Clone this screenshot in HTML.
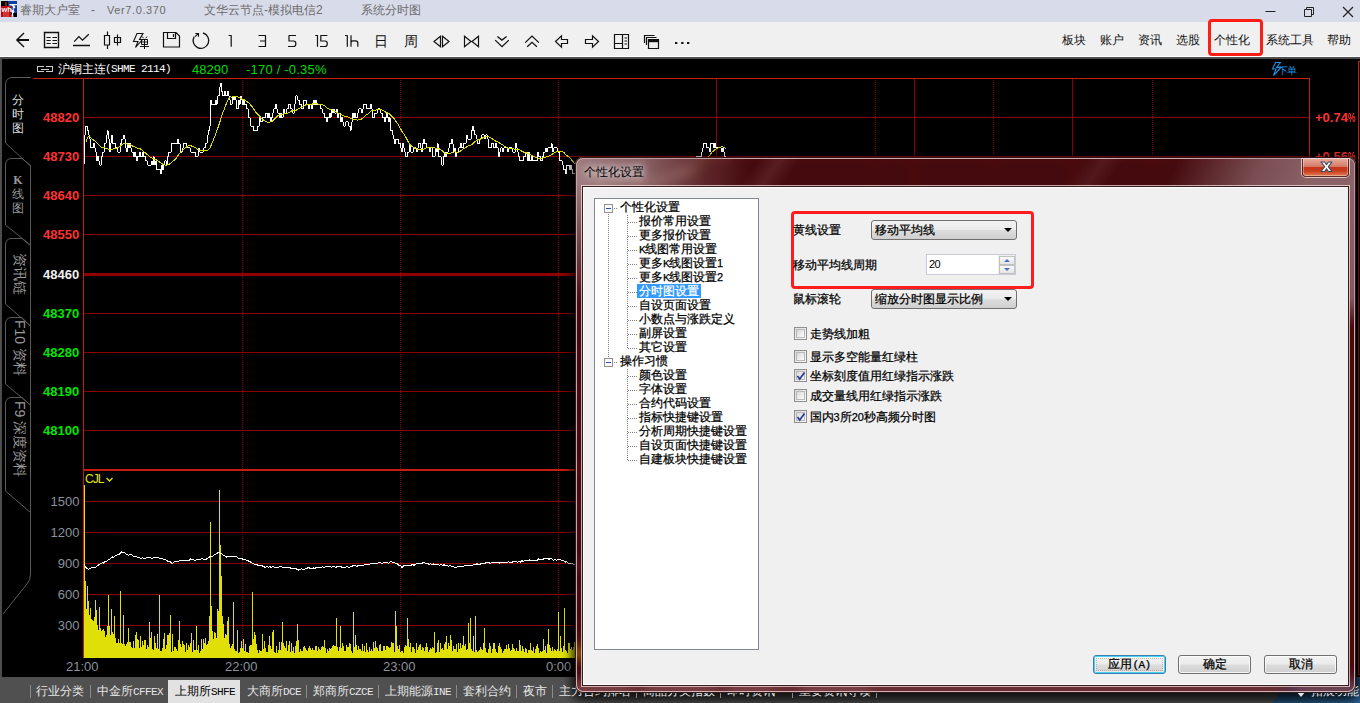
<!DOCTYPE html>
<html><head><meta charset="utf-8"><title>UI</title>
<style>
*{box-sizing:border-box;margin:0;padding:0}
html,body{width:1360px;height:703px;overflow:hidden;background:#000}
body{position:relative;font-family:"Liberation Sans",sans-serif;font-size:12px;color:#000}
.abs{position:absolute;white-space:nowrap}
#title{left:0;top:0;width:1360px;height:22px;background:#d8dbe9}
#title span{position:absolute;top:2px;font-size:12px;color:#6c6c6c;white-space:nowrap;line-height:16px}
#toolbar{z-index:2;left:0;top:22px;width:1360px;height:35px;background:#f0f0f0;border-bottom:1px solid #fff}
#sep{left:0;top:57px;width:1360px;height:2px;background:#505050}
#main{left:0;top:59px;width:1360px;height:618px;background:#000;border-left:2px solid #4c4c4c}
#tabs{left:0;top:677px;width:1360px;height:26px;background:#505050}
.menu{position:absolute;top:10px;font-size:12px;color:#111;white-space:nowrap;line-height:16px}
.tn{position:absolute;top:9px;font-size:15px;color:#111;white-space:nowrap;line-height:20px;text-align:center;width:30px}
.pl{position:absolute;left:43px;font-weight:bold;font-size:13px;width:40px;line-height:14px;white-space:nowrap}
.pc{display:inline-block;transform:scaleX(.66);transform-origin:0 50%}
.vl{position:absolute;left:41.5px;font-size:13px;width:38px;line-height:14px;color:#8a909c;text-align:right;white-space:nowrap}
.tl{position:absolute;top:660px;font-size:13px;line-height:14px;color:#8a909c;white-space:nowrap}
.tab{position:absolute;top:684px;font-size:12px;line-height:14px;color:#e6e6e6;white-space:nowrap}
.m{font-family:"Liberation Mono",monospace;font-weight:normal;font-size:11px;letter-spacing:-0.6px}
.d{font-family:"Liberation Sans",sans-serif;font-weight:normal;font-size:11px}
.tsep{position:absolute;top:685px;width:1px;height:13px;background:#8a8a8a}
.vt{position:absolute;left:11px;width:14px;font-size:12px;line-height:14px;color:#9a9a9a;text-align:center;white-space:normal;word-break:break-all}
.vb{display:block;height:14px;overflow:visible}
.rt{position:absolute;font-size:14px;line-height:16px;color:#9a9a9a;white-space:nowrap;transform-origin:0 0;transform:rotate(90deg)}
/* dialog */

#dlg{left:575px;top:157px;width:781px;height:536px;border-radius:8px;box-shadow:inset 0 0 0 1px rgba(30,6,8,.9), inset 0 0 0 2px rgba(255,235,235,.7)}
#glass{left:575px;top:157px;width:781px;height:536px;border-radius:8px;overflow:hidden;background:#000}
#gcopy{left:-575px;top:-157px;width:1360px;height:760px;filter:blur(6px)}
#gtint{left:0;top:0;width:781px;height:536px;background:rgba(124,18,24,.55)}
#client{left:9px;top:31px;width:764px;height:496px;background:#f0f0f0}
#cfr{left:6px;top:28px;width:769px;height:502px;border:1px solid rgba(255,235,235,.7)}
#cfr2{left:7px;top:29px;width:767px;height:500px;border:1px solid rgba(40,8,10,.92);background:#fff}
#tree{left:10px;top:10px;width:165px;height:452px;border:1px solid #828790;background:#fff}
#close{left:727px;top:2px;width:47px;height:18px;border:1px solid rgba(70,20,20,.85);border-top:0;border-radius:0 0 4px 4px;background:linear-gradient(#e9a89a 0%,#dd8f7f 25%,#d67a68 44%,#c4351c 47%,#c83c1e 70%,#d8683f 90%,#e08a60 100%);box-shadow:inset 1px 0 0 rgba(255,255,255,.35),inset -1px 0 0 rgba(255,255,255,.35),inset 0 -1px 0 rgba(255,255,255,.3),0 0 0 1px rgba(255,240,240,.7)}
.jt{display:inline-block;white-space:nowrap;vertical-align:top}
.ti{position:absolute;font-size:12px;line-height:14px;white-space:nowrap;color:#000;-webkit-text-stroke:0.25px #000}
.lb{position:absolute;font-size:12px;line-height:14px;white-space:nowrap;color:#000;-webkit-text-stroke:0.25px #000}
.combo{position:absolute;height:20px;border:1px solid #707070;border-radius:3px;background:linear-gradient(#f2f2f2 0%,#ebebeb 48%,#dddddd 52%,#cfcfcf 100%);font-size:12px;line-height:18px;padding-left:3px;white-space:nowrap;-webkit-text-stroke:0.25px #000}
.combo:after{content:"";position:absolute;right:4px;top:7px;border:4px solid transparent;border-top:4px solid #000;border-bottom:0}
.cb{position:absolute;width:13px;height:13px;border:1px solid #8e8f8f;background:linear-gradient(135deg,#dcdcdc,#fafafa)}
.cb i{position:absolute;left:1px;top:1px;width:9px;height:9px;border:1px solid #b8b8b8;background:linear-gradient(135deg,#d8d8d8,#fdfdfd);display:block}
.btn{position:absolute;height:19px;border:1px solid #707070;border-radius:3px;background:linear-gradient(#f2f2f2 0%,#ebebeb 48%,#dddddd 52%,#cfcfcf 100%);font-size:12px;line-height:17px;text-align:center;white-space:nowrap;-webkit-text-stroke:0.25px #000;box-shadow:inset 0 0 0 1px rgba(255,255,255,.8)}
</style></head><body>
<div id="title" class="abs">
<svg class="abs" style="left:1px;top:1px" width="16" height="16" viewBox="0 0 16 16"><rect width="16" height="16" fill="#000"/><rect x="7" y="0" width="9" height="12" fill="#0a3ea0"/><rect x="4" y="1" width="2" height="4" fill="#6a2626"/><rect x="0" y="5" width="10" height="11" fill="#c80404"/><rect x="2" y="11" width="6" height="5" fill="#d86060" opacity=".55"/><path d="M8.500 3h7.500v1.300h-3l1.500 2-2 2 1 2.500-1.500 2 .5 3h-2.200l.7-4-.8-2.500 1.800-2.500-1-2.300h-2.500z" fill="#fff"/><path d="M11 5.500l1 2-1.200 2" stroke="#0a3ea0" stroke-width=".800" fill="none"/><text x="0.600" y="10.600" font-family="Liberation Sans" font-weight="bold" font-size="7.500" fill="#fff" letter-spacing="-0.300">wh</text></svg>
<span style="width:60px;text-align-last:justify;left:20px">睿期大户室</span><span style="left:91px">-</span><span style="left:107px;font-size:11px;letter-spacing:0.6px">Ver7.0.370</span>
<span style="width:118.7px;text-align-last:justify;left:204px">文华云节点-模拟电信2</span><span style="width:60px;text-align-last:justify;left:361px">系统分时图</span>
<svg class="abs" style="left:1260px;top:0" width="100" height="22" viewBox="0 0 100 22" fill="none" stroke="#222" stroke-width="1"><path d="M5.5 11.5h10"/><path d="M44.5 9.5h7v7h-7zM46.5 9.5v-2h7v7h-2"/><path d="M83 7l10 10M93 7l-10 10" stroke-width="1.200"/></svg>
</div>
<div id="toolbar" class="abs">
<svg class="abs" style="left:0;top:0" width="700" height="35" viewBox="0 0 700 35" fill="none" stroke="#111" stroke-width="1.3" stroke-linecap="butt">
<!-- back arrow -->
<path d="M29 18H17" stroke-width="2"/><path d="M24 11L16.800 18L24 25" stroke-width="1.400"/>
<!-- table -->
<path d="M44.500 10.500h14v15h-14z" stroke-width="1.400"/><path d="M46.500 15.500h4.200M52.500 15.500h4.500M46.500 18.500h4.200M52.500 18.500h4.500M46.500 21.500h4.200M52.500 21.500h4.500" stroke-width="1.200"/>
<!-- line chart -->
<path d="M74.200 19.600L78.900 14.600L82.500 18.200L88.800 12.300M73 23.500h17" stroke-width="1.300"/>
<!-- candles -->
<path d="M104.500 13.500h5v9.500h-5zM107.500 9.500v4M107.500 23v4M114.500 15.500h6v5h-6zM117.500 12.500v11" stroke-width="1.200"/>
<!-- flash bomb -->
<path d="M137 11.500H143L139.500 17.500H142.500L135.500 25.500L138 19.500H133.500Z" stroke-width="1.100" stroke-linejoin="miter"/><path d="M141.500 17.500h6v5h-6zM141.500 20h6M144.500 17.500v9.500M140 24.500h9M142.300 14.600l1.200 1.600M146.900 14.600l-1.200 1.600" stroke-width="1"/>
<!-- save -->
<path d="M163.500 10.500h12.500l3.500 3.500v11h-16zM167.500 10.500v6h8v-6M173.500 12v3" stroke-width="1.200"/>
<!-- refresh -->
<path d="M203 11A7.800 7.800 0 1 1 194.200 14.600" stroke-width="1.300"/><path d="M195.300 11.500H198.500V14.800M198.500 11.500L195 14.600" stroke-width="1.100"/>
<!-- digits -->
<g stroke-width="1.200" stroke-linejoin="round">
<path d="M228.600 13.500H231.200V24.800"/>
<path d="M258.500 13.500H265.500V24.500H258.500M260 19H265.500"/>
<path d="M296 13.500H289V19H293.500Q295.800 19 295.800 21.200V22.300Q295.800 24.500 293.500 24.500H288"/>
<path d="M315.200 13.500H317.500V24.800M327.400 13.500H320.800V19H325Q327.200 19 327.200 21.200V22.300Q327.200 24.500 325 24.500H320"/>
<path d="M345 13.500H347.300V24.800M351 13.300V24.800M351 20.800Q351 18.800 353 18.800H355.500Q357.800 18.800 357.800 21V24.800"/>
</g>
<!-- <> -->
<path d="M440.500 14.200L434 19.500L440.500 24.800ZM442.500 14.200L449 19.500L442.500 24.800Z" stroke-width="1.200"/>
<!-- >< -->
<path d="M464.500 14.200L471 19.500L464.500 24.800ZM478.500 14.200L472 19.500L478.500 24.800Z" stroke-width="1.200"/>
<!-- chevrons down -->
<path d="M497.400 14.400L501.900 18.100L506.600 14.400M495.200 18.100L502 24.700L508.800 18.100" stroke-width="1.300"/>
<!-- chevrons up -->
<path d="M525.200 20.600L532 14.100L538.900 20.600M527.200 24.700L532 20.300L536.900 24.700" stroke-width="1.300"/>
<!-- left arrow outline -->
<path d="M555.500 19.500L561.500 13.800V17.500H567.500V21.500H561.500V25.200Z" stroke-width="1.200"/>
<!-- right arrow outline -->
<path d="M598.500 19.500L592.500 13.800V17.500H585.500V21.500H592.500V25.200Z" stroke-width="1.200"/>
<!-- layout -->
<path d="M614.500 12.500h14v14h-14zM622.500 12.500v14M614.500 21.500h8M624.500 16h2.500M624.500 19h2.500M624.500 22h2.500" stroke-width="1.200"/>
<!-- windows -->
<path d="M644.500 21V13.500H654.500M646.500 23V15.500H656.500M648.500 17.500h10v9h-10zM648.500 19h10" stroke-width="1.200"/><path d="M648.500 19h10" stroke-width="2.400"/>
<!-- dots -->
<path d="M675 21h2.300M681.200 21h2.300M687 21h2.300" stroke-width="2.200"/>
</svg>
<span class="tn" style="left:366px;font-size:14px">日</span><span class="tn" style="left:396px;font-size:14px">周</span>
<span class="menu" style="width:24px;text-align-last:justify;left:1062px">板块</span><span class="menu" style="width:24px;text-align-last:justify;left:1100px">账户</span><span class="menu" style="width:24px;text-align-last:justify;left:1138px">资讯</span><span class="menu" style="width:24px;text-align-last:justify;left:1176px">选股</span><span class="menu" style="width:36px;text-align-last:justify;left:1214px">个性化</span><span class="menu" style="width:48px;text-align-last:justify;left:1266px">系统工具</span><span class="menu" style="width:24px;text-align-last:justify;left:1327px">帮助</span>
<div class="abs" style="left:1208px;top:-3px;width:55px;height:37px;border:3px solid #ff1e14;border-radius:4px"></div>
</div>
<div id="sep" class="abs"></div>
<div id="main" class="abs"></div>
<svg class="abs" style="left:0;top:0" width="1360" height="703" viewBox="0 0 1360 703">
<g id="chart">
<g fill="none" stroke="#900000" stroke-width="1" shape-rendering="crispEdges">
<path d="M83 117.500H1310M83 156.500H1310M83 195.500H1310M83 234.500H1310M83 313.500H1310M83 352.500H1310M83 391.500H1310M83 430.500H1310M83 501.500H1310M83 532.500H1310M83 563.500H1310M83 594.500H1310M83 625.500H1310"/>
<path d="M716.500 78V658M914.500 78V658M1072.500 78V658"/>
<path d="M83 274.500H1310" stroke-width="3"/>
<path d="M242.500 78V658M400.500 78V658M558.500 78V658M875.500 78V658M993.500 78V658M1152.500 78V658" stroke-dasharray="1 1"/>
<g stroke="#c81c10"><path d="M33 78.500H1310M83.500 78V658M1309.500 78V658M1358.500 61V675M1358 674.500H1360M1358 61.500H1360"/><path d="M83 470H1310" stroke-width="2"/></g>
</g>
<path d="M84.5 658V485M85.5 658V581M86.5 658V609M87.5 658V586M88.5 658V601M89.5 658V615M90.5 658V608M91.5 658V619M92.5 658V620M93.5 658V621M94.5 658V617M95.5 658V600M96.5 658V610M97.5 658V625M98.5 658V630M99.5 658V607M100.5 658V628M101.5 658V631M102.5 658V630M103.5 658V629M104.5 658V631M105.5 658V637M106.5 658V635M107.5 658V626M108.5 658V595M109.5 658V626M110.5 658V635M111.5 658V609M112.5 658V632M113.5 658V634M114.5 658V616M115.5 658V638M116.5 658V643M117.5 658V643M118.5 658V639M119.5 658V643M120.5 658V591M121.5 658V643M122.5 658V644M123.5 658V615M124.5 658V644M125.5 658V646M126.5 658V644M127.5 658V642M128.5 658V628M129.5 658V642M130.5 658V642M131.5 658V647M132.5 658V648M133.5 658V641M134.5 658V648M135.5 658V635M136.5 658V632M137.5 658V639M138.5 658V640M139.5 658V648M140.5 658V636M141.5 658V647M142.5 658V641M143.5 658V645M144.5 658V640M145.5 658V640M146.5 658V649M147.5 658V645M148.5 658V647M149.5 658V622M150.5 658V638M151.5 658V632M152.5 658V649M153.5 658V650M154.5 658V636M155.5 658V643M156.5 658V648M157.5 658V634M158.5 658V649M159.5 658V595M160.5 658V651M161.5 658V651M162.5 658V648M163.5 658V639M164.5 658V633M165.5 658V649M166.5 658V645M167.5 658V635M168.5 658V635M169.5 658V633M170.5 658V615M171.5 658V652M172.5 658V634M173.5 658V651M174.5 658V647M175.5 658V647M176.5 658V649M177.5 658V651M178.5 658V640M179.5 658V621M180.5 658V644M181.5 658V647M182.5 658V641M183.5 658V644M184.5 658V645M185.5 658V652M186.5 658V643M187.5 658V650M188.5 658V645M189.5 658V647M190.5 658V643M191.5 658V633M192.5 658V652M193.5 658V640M194.5 658V650M195.5 658V650M196.5 658V626M197.5 658V650M198.5 658V645M199.5 658V653M200.5 658V651M201.5 658V639M202.5 658V649M203.5 658V639M204.5 658V643M205.5 658V638M206.5 658V645M207.5 658V644M208.5 658V641M209.5 658V616M210.5 658V522M211.5 658V606M212.5 658V631M213.5 658V639M214.5 658V632M215.5 658V633M216.5 658V638M217.5 658V609M218.5 658V611M219.5 658V490M220.5 658V545M221.5 658V576M222.5 658V616M223.5 658V624M224.5 658V638M225.5 658V634M226.5 658V635M227.5 658V621M228.5 658V617M229.5 658V644M230.5 658V648M231.5 658V646M232.5 658V644M233.5 658V602M234.5 658V649M235.5 658V651M236.5 658V651M237.5 658V630M238.5 658V653M239.5 658V652M240.5 658V648M241.5 658V641M242.5 658V648M243.5 658V639M244.5 658V651M245.5 658V644M246.5 658V652M247.5 658V652M248.5 658V653M249.5 658V646M250.5 658V645M251.5 658V645M252.5 658V592M253.5 658V639M254.5 658V632M255.5 658V635M256.5 658V644M257.5 658V650M258.5 658V653M259.5 658V650M260.5 658V651M261.5 658V651M262.5 658V634M263.5 658V649M264.5 658V641M265.5 658V648M266.5 658V652M267.5 658V652M268.5 658V645M269.5 658V636M270.5 658V646M271.5 658V649M272.5 658V632M273.5 658V630M274.5 658V652M275.5 658V653M276.5 658V646M277.5 658V653M278.5 658V650M279.5 658V642M280.5 658V650M281.5 658V642M282.5 658V622M283.5 658V643M284.5 658V646M285.5 658V648M286.5 658V641M287.5 658V651M288.5 658V645M289.5 658V641M290.5 658V652M291.5 658V643M292.5 658V651M293.5 658V647M294.5 658V653M295.5 658V646M296.5 658V641M297.5 658V624M298.5 658V640M299.5 658V652M300.5 658V649M301.5 658V651M302.5 658V651M303.5 658V647M304.5 658V646M305.5 658V648M306.5 658V650M307.5 658V651M308.5 658V648M309.5 658V646M310.5 658V648M311.5 658V650M312.5 658V648M313.5 658V650M314.5 658V650M315.5 658V646M316.5 658V646M317.5 658V651M318.5 658V647M319.5 658V649M320.5 658V650M321.5 658V647M322.5 658V646M323.5 658V647M324.5 658V640M325.5 658V648M326.5 658V653M327.5 658V649M328.5 658V651M329.5 658V648M330.5 658V649M331.5 658V648M332.5 658V646M333.5 658V645M334.5 658V646M335.5 658V646M336.5 658V618M337.5 658V647M338.5 658V651M339.5 658V647M340.5 658V626M341.5 658V648M342.5 658V643M343.5 658V646M344.5 658V651M345.5 658V651M346.5 658V645M347.5 658V647M348.5 658V647M349.5 658V643M350.5 658V644M351.5 658V651M352.5 658V653M353.5 658V612M354.5 658V647M355.5 658V635M356.5 658V645M357.5 658V650M358.5 658V646M359.5 658V649M360.5 658V649M361.5 658V651M362.5 658V644M363.5 658V651M364.5 658V646M365.5 658V652M366.5 658V643M367.5 658V650M368.5 658V652M369.5 658V647M370.5 658V651M371.5 658V649M372.5 658V651M373.5 658V642M374.5 658V648M375.5 658V641M376.5 658V647M377.5 658V648M378.5 658V651M379.5 658V645M380.5 658V644M381.5 658V651M382.5 658V651M383.5 658V646M384.5 658V646M385.5 658V650M386.5 658V646M387.5 658V646M388.5 658V647M389.5 658V648M390.5 658V647M391.5 658V642M392.5 658V643M393.5 658V643M394.5 658V652M395.5 658V611M396.5 658V626M397.5 658V646M398.5 658V649M399.5 658V645M400.5 658V652M401.5 658V651M402.5 658V651M403.5 658V653M404.5 658V647M405.5 658V645M406.5 658V646M407.5 658V618M408.5 658V639M409.5 658V647M410.5 658V643M411.5 658V652M412.5 658V647M413.5 658V647M414.5 658V649M415.5 658V653M416.5 658V643M417.5 658V650M418.5 658V647M419.5 658V645M420.5 658V644M421.5 658V650M422.5 658V647M423.5 658V648M424.5 658V651M425.5 658V647M426.5 658V643M427.5 658V647M428.5 658V652M429.5 658V650M430.5 658V648M431.5 658V649M432.5 658V647M433.5 658V648M434.5 658V632M435.5 658V653M436.5 658V652M437.5 658V643M438.5 658V640M439.5 658V652M440.5 658V643M441.5 658V649M442.5 658V648M443.5 658V650M444.5 658V644M445.5 658V642M446.5 658V636M447.5 658V649M448.5 658V643M449.5 658V646M450.5 658V635M451.5 658V640M452.5 658V651M453.5 658V646M454.5 658V649M455.5 658V649M456.5 658V644M457.5 658V652M458.5 658V643M459.5 658V649M460.5 658V643M461.5 658V648M462.5 658V645M463.5 658V636M464.5 658V646M465.5 658V644M466.5 658V650M467.5 658V649M468.5 658V623M469.5 658V643M470.5 658V618M471.5 658V649M472.5 658V651M473.5 658V636M474.5 658V652M475.5 658V616M476.5 658V650M477.5 658V652M478.5 658V651M479.5 658V650M480.5 658V647M481.5 658V649M482.5 658V650M483.5 658V643M484.5 658V628M485.5 658V648M486.5 658V652M487.5 658V653M488.5 658V649M489.5 658V643M490.5 658V646M491.5 658V653M492.5 658V649M493.5 658V643M494.5 658V643M495.5 658V649M496.5 658V652M497.5 658V653M498.5 658V646M499.5 658V643M500.5 658V647M501.5 658V649M502.5 658V653M503.5 658V651M504.5 658V649M505.5 658V649M506.5 658V645M507.5 658V649M508.5 658V644M509.5 658V648M510.5 658V651M511.5 658V650M512.5 658V644M513.5 658V648M514.5 658V649M515.5 658V651M516.5 658V648M517.5 658V651M518.5 658V651M519.5 658V640M520.5 658V645M521.5 658V651M522.5 658V646M523.5 658V649M524.5 658V652M525.5 658V648M526.5 658V649M527.5 658V653M528.5 658V650M529.5 658V650M530.5 658V643M531.5 658V650M532.5 658V651M533.5 658V647M534.5 658V653M535.5 658V649M536.5 658V646M537.5 658V644M538.5 658V648M539.5 658V653M540.5 658V651M541.5 658V652M542.5 658V651M543.5 658V639M544.5 658V650M545.5 658V646M546.5 658V653M547.5 658V644M548.5 658V629M549.5 658V645M550.5 658V648M551.5 658V651M552.5 658V647M553.5 658V651M554.5 658V649M555.5 658V650M556.5 658V651M557.5 658V649M558.5 658V612M559.5 658V651M560.5 658V636M561.5 658V648M562.5 658V652M563.5 658V646M564.5 658V608M565.5 658V650M566.5 658V651M567.5 658V653M568.5 658V643M569.5 658V643M570.5 658V649M571.5 658V647M572.5 658V650M573.5 658V647M574.5 658V642M575.5 658V652M576.5 658V649M577.5 658V653M578.5 658V633M579.5 658V653M580.5 658V648M581.5 658V653M582.5 658V646M583.5 658V653M584.5 658V648M585.5 658V650M586.5 658V650M587.5 658V651M588.5 658V652M589.5 658V653M590.5 658V651M591.5 658V649M592.5 658V629M593.5 658V651M594.5 658V631M595.5 658V650M596.5 658V651M597.5 658V649M598.5 658V653M599.5 658V648M600.5 658V643M601.5 658V652M602.5 658V649M603.5 658V652M604.5 658V651M605.5 658V652M606.5 658V651M607.5 658V649M608.5 658V648M609.5 658V646M610.5 658V643M611.5 658V649M612.5 658V643M613.5 658V643M614.5 658V650M615.5 658V652M616.5 658V650M617.5 658V650M618.5 658V646M619.5 658V652M620.5 658V649M621.5 658V651M622.5 658V649M623.5 658V646M624.5 658V652M625.5 658V651M626.5 658V652M627.5 658V648M628.5 658V635M629.5 658V650M630.5 658V648M631.5 658V646M632.5 658V652M633.5 658V651M634.5 658V650M635.5 658V652M636.5 658V650M637.5 658V646M638.5 658V653M639.5 658V629M640.5 658V653M641.5 658V642M642.5 658V652M643.5 658V649M644.5 658V646M645.5 658V647M646.5 658V642M647.5 658V647M648.5 658V651M649.5 658V652M650.5 658V631M651.5 658V646M652.5 658V645M653.5 658V640M654.5 658V652M655.5 658V648M656.5 658V653M657.5 658V646M658.5 658V651M659.5 658V651M660.5 658V653M661.5 658V650M662.5 658V652M663.5 658V651M664.5 658V652M665.5 658V649M666.5 658V648M667.5 658V632M668.5 658V645M669.5 658V649M670.5 658V650M671.5 658V652M672.5 658V644M673.5 658V644M674.5 658V644M675.5 658V651M676.5 658V646M677.5 658V643M678.5 658V651M679.5 658V650M680.5 658V646M681.5 658V645M682.5 658V649M683.5 658V645M684.5 658V650M685.5 658V649M686.5 658V639M687.5 658V648M688.5 658V653M689.5 658V653M690.5 658V651M691.5 658V645M692.5 658V648M693.5 658V644M694.5 658V648M695.5 658V651M696.5 658V641M697.5 658V651M698.5 658V652M699.5 658V651M700.5 658V647M701.5 658V651M702.5 658V649M703.5 658V652M704.5 658V648M705.5 658V648M706.5 658V650M707.5 658V651M708.5 658V653M709.5 658V651M710.5 658V652M711.5 658V646M712.5 658V651M713.5 658V652M714.5 658V653M715.5 658V650M716.5 658V650M717.5 658V651M718.5 658V653M719.5 658V637M720.5 658V650M721.5 658V645M722.5 658V642M723.5 658V648M724.5 658V652M725.5 658V645M726.5 658V630" stroke="#e0e008" stroke-width="1" fill="none" shape-rendering="crispEdges"/>
<polyline points="84.0,564.1 85.5,567.0 87.0,568.4 88.5,569.3 90.0,568.5 91.5,567.5 93.0,567.0 94.5,567.0 96.0,567.0 97.5,565.9 99.0,564.4 100.5,563.5 102.0,562.9 103.5,563.2 105.0,561.5 106.5,561.2 108.0,559.9 109.5,559.6 111.0,558.2 112.5,556.9 114.0,557.2 115.5,555.8 117.0,555.1 118.5,554.5 120.0,553.8 121.5,551.9 123.0,552.8 124.5,552.9 126.0,553.9 127.5,554.9 129.0,555.2 130.5,554.4 132.0,555.1 133.5,556.6 135.0,556.8 136.5,556.8 138.0,557.4 139.5,557.3 141.0,558.6 142.5,557.8 144.0,558.6 145.5,558.2 147.0,557.3 148.5,557.7 150.0,557.5 151.5,558.6 153.0,558.1 154.5,557.3 156.0,557.5 157.5,557.8 159.0,557.9 160.5,558.3 162.0,558.7 163.5,559.2 165.0,559.3 166.5,560.8 168.0,561.1 169.5,561.2 171.0,562.5 172.5,563.7 174.0,561.8 175.5,561.6 177.0,562.1 178.5,561.1 180.0,560.8 181.5,560.8 183.0,560.1 184.5,560.2 186.0,560.0 187.5,560.6 189.0,560.6 190.5,559.0 192.0,559.7 193.5,560.0 195.0,560.1 196.5,559.9 198.0,559.6 199.5,559.5 201.0,559.0 202.5,558.8 204.0,559.5 205.5,559.4 207.0,558.8 208.5,557.8 210.0,556.5 211.5,556.6 213.0,555.9 214.5,554.8 216.0,554.2 217.5,553.0 219.0,552.6 220.5,553.4 222.0,553.9 223.5,555.4 225.0,555.8 226.5,557.1 228.0,556.5 229.5,556.5 231.0,556.5 232.5,556.6 234.0,557.0 235.5,556.9 237.0,556.8 238.5,558.4 240.0,557.9 241.5,558.5 243.0,559.3 244.5,559.5 246.0,559.9 247.5,560.3 249.0,561.3 250.5,561.9 252.0,563.1 253.5,563.4 255.0,564.6 256.5,564.2 258.0,565.7 259.5,565.7 261.0,565.5 262.5,566.0 264.0,566.7 265.5,567.5 267.0,566.5 268.5,567.3 270.0,566.8 271.5,567.6 273.0,566.4 274.5,567.1 276.0,567.9 277.5,567.0 279.0,567.0 280.5,566.7 282.0,567.0 283.5,567.3 285.0,568.1 286.5,567.4 288.0,567.7 289.5,567.5 291.0,568.3 292.5,569.0 294.0,568.8 295.5,568.3 297.0,569.4 298.5,570.0 300.0,569.7 301.5,568.6 303.0,569.6 304.5,569.5 306.0,568.5 307.5,568.0 309.0,567.9 310.5,568.2 312.0,568.6 313.5,568.0 315.0,568.3 316.5,567.0 318.0,567.0 319.5,567.5 321.0,567.2 322.5,566.8 324.0,567.3 325.5,566.7 327.0,566.3 328.5,566.9 330.0,566.3 331.5,567.2 333.0,566.7 334.5,567.0 336.0,567.2 337.5,566.6 339.0,566.9 340.5,566.2 342.0,567.7 343.5,567.1 345.0,567.8 346.5,566.3 348.0,567.2 349.5,567.4 351.0,566.6 352.5,566.0 354.0,565.8 355.5,565.6 357.0,566.4 358.5,565.1 360.0,566.0 361.5,565.2 363.0,565.1 364.5,565.0 366.0,564.7 367.5,564.6 369.0,564.3 370.5,563.7 372.0,564.1 373.5,563.1 375.0,563.6 376.5,563.4 378.0,563.2 379.5,562.3 381.0,562.9 382.5,563.3 384.0,562.4 385.5,562.1 387.0,562.5 388.5,563.2 390.0,561.9 391.5,561.7 393.0,562.5 394.5,562.7 396.0,563.6 397.5,563.9 399.0,565.9 400.5,565.6 402.0,567.4 403.5,566.0 405.0,565.6 406.5,565.5 408.0,565.1 409.5,565.5 411.0,565.3 412.5,564.4 414.0,565.3 415.5,564.1 417.0,563.4 418.5,563.2 420.0,563.8 421.5,563.8 423.0,562.6 424.5,562.5 426.0,563.9 427.5,563.2 429.0,564.5 430.5,563.9 432.0,564.3 433.5,564.0 435.0,564.9 436.5,564.5 438.0,564.5 439.5,565.6 441.0,564.5 442.5,565.6 444.0,564.7 445.5,565.8 447.0,565.5 448.5,566.4 450.0,565.3 451.5,566.3 453.0,566.2 454.5,567.1 456.0,567.3 457.5,567.0 459.0,566.5 460.5,566.5 462.0,566.3 463.5,566.3 465.0,565.8 466.5,565.5 468.0,566.1 469.5,565.7 471.0,564.9 472.5,565.8 474.0,564.3 475.5,564.6 477.0,563.7 478.5,564.6 480.0,564.4 481.5,563.2 483.0,563.7 484.5,563.6 486.0,562.6 487.5,562.6 489.0,562.8 490.5,563.4 492.0,562.2 493.5,562.9 495.0,562.7 496.5,562.4 498.0,562.6 499.5,563.0 501.0,561.8 502.5,562.9 504.0,562.0 505.5,562.6 507.0,562.6 508.5,561.5 510.0,562.5 511.5,562.7 513.0,561.5 514.5,561.0 516.0,561.0 517.5,562.4 519.0,560.8 520.5,562.1 522.0,560.7 523.5,561.5 525.0,560.4 526.5,560.3 528.0,561.0 529.5,559.9 531.0,560.1 532.5,560.9 534.0,560.4 535.5,560.6 537.0,560.6 538.5,558.9 540.0,559.1 541.5,559.8 543.0,559.5 544.5,558.3 546.0,559.1 547.5,558.7 549.0,559.2 550.5,558.7 552.0,558.7 553.5,560.4 555.0,559.4 556.5,560.4 558.0,559.3 559.5,559.9 561.0,559.8 562.5,560.7 564.0,560.8 565.5,562.1 567.0,561.8 568.5,563.2 570.0,563.3 571.5,563.2 573.0,564.1 574.5,564.8 576.0,565.9 577.5,565.3 579.0,565.5 580.5,567.0 582.0,567.2 583.5,567.3 585.0,567.0 586.5,567.1 588.0,567.6 589.5,567.7 591.0,568.0 592.5,569.1 594.0,569.3 595.5,569.8 597.0,569.9 598.5,569.7 600.0,571.1 601.5,571.4 603.0,571.6 604.5,571.9 606.0,572.5 607.5,573.3 609.0,573.5 610.5,573.6 612.0,573.4 613.5,573.6 615.0,574.1 616.5,575.4 618.0,574.8 619.5,575.1 621.0,575.5 622.5,575.4 624.0,577.2 625.5,575.9 627.0,577.2 628.5,578.1 630.0,577.4 631.5,578.3 633.0,578.2 634.5,578.4 636.0,578.7 637.5,578.9 639.0,580.4 640.5,580.6 642.0,581.2 643.5,580.2 645.0,581.5 646.5,581.3 648.0,582.2 649.5,582.3 651.0,582.3 652.5,583.7 654.0,582.5 655.5,584.1 657.0,584.6 658.5,584.4 660.0,584.8 661.5,585.8 663.0,585.0 664.5,586.0 666.0,586.5 667.5,586.2 669.0,587.1 670.5,587.0 672.0,587.5 673.5,588.0 675.0,588.5 676.5,588.2 678.0,589.1 679.5,589.3 681.0,589.1 682.5,590.1 684.0,589.9 685.5,591.3 687.0,590.9 688.5,591.7 690.0,591.7 691.5,592.0 693.0,591.9 694.5,592.1 696.0,593.7 697.5,593.4 699.0,593.8 700.5,594.1 702.0,594.9 703.5,594.4 705.0,594.6 706.5,596.0 708.0,595.8 709.5,596.4 711.0,597.0 712.5,597.5 714.0,597.8 715.5,596.8 717.0,597.7 718.5,598.8 720.0,599.1 721.5,598.4 723.0,598.8 724.5,599.3 726.0,599.4" fill="none" stroke="#fff" stroke-width="1" shape-rendering="crispEdges"/>
<polyline points="84.0,165.2 85.0,134.8 86.0,126.2 87.0,126.2 88.0,130.5 89.0,134.8 90.0,139.2 91.0,147.8 92.0,147.8 93.0,147.8 94.0,143.5 95.0,147.8 96.0,152.2 97.0,160.8 98.0,156.5 99.0,160.8 100.0,165.2 101.0,165.2 102.0,156.5 103.0,152.2 104.0,152.2 105.0,143.5 106.0,143.5 107.0,134.8 108.0,130.5 109.0,139.2 110.0,152.2 111.0,143.5 112.0,134.8 113.0,143.5 114.0,143.5 115.0,143.5 116.0,147.8 117.0,147.8 118.0,152.2 119.0,152.2 120.0,152.2 121.0,143.5 122.0,139.2 123.0,139.2 124.0,134.8 125.0,139.2 126.0,147.8 127.0,152.2 128.0,143.5 129.0,147.8 130.0,143.5 131.0,147.8 132.0,152.2 133.0,152.2 134.0,156.5 135.0,152.2 136.0,156.5 137.0,160.8 138.0,156.5 139.0,156.5 140.0,152.2 141.0,156.5 142.0,156.5 143.0,152.2 144.0,156.5 145.0,156.5 146.0,160.8 147.0,160.8 148.0,165.2 149.0,165.2 150.0,165.2 151.0,165.2 152.0,160.8 153.0,165.2 154.0,156.5 155.0,165.2 156.0,160.8 157.0,169.5 158.0,169.5 159.0,169.5 160.0,169.5 161.0,173.8 162.0,165.2 163.0,169.5 164.0,165.2 165.0,160.8 166.0,160.8 167.0,165.2 168.0,156.5 169.0,152.2 170.0,152.2 171.0,152.2 172.0,143.5 173.0,143.5 174.0,143.5 175.0,143.5 176.0,143.5 177.0,143.5 178.0,139.2 179.0,143.5 180.0,143.5 181.0,152.2 182.0,152.2 183.0,147.8 184.0,143.5 185.0,143.5 186.0,143.5 187.0,147.8 188.0,147.8 189.0,147.8 190.0,147.8 191.0,152.2 192.0,152.2 193.0,152.2 194.0,152.2 195.0,152.2 196.0,156.5 197.0,156.5 198.0,156.5 199.0,147.8 200.0,152.2 201.0,152.2 202.0,152.2 203.0,152.2 204.0,147.8 205.0,147.8 206.0,143.5 207.0,143.5 208.0,134.8 209.0,130.5 210.0,126.2 211.0,100.2 212.0,104.5 213.0,104.5 214.0,104.5 215.0,104.5 216.0,100.2 217.0,104.5 218.0,95.8 219.0,95.8 220.0,87.2 221.0,82.8 222.0,91.5 223.0,95.8 224.0,95.8 225.0,91.5 226.0,95.8 227.0,95.8 228.0,91.5 229.0,95.8 230.0,100.2 231.0,104.5 232.0,104.5 233.0,95.8 234.0,100.2 235.0,95.8 236.0,100.2 237.0,108.8 238.0,108.8 239.0,100.2 240.0,104.5 241.0,95.8 242.0,100.2 243.0,104.5 244.0,100.2 245.0,104.5 246.0,104.5 247.0,108.8 248.0,108.8 249.0,117.5 250.0,117.5 251.0,126.2 252.0,126.2 253.0,126.2 254.0,130.5 255.0,130.5 256.0,130.5 257.0,130.5 258.0,126.2 259.0,126.2 260.0,117.5 261.0,121.8 262.0,121.8 263.0,117.5 264.0,117.5 265.0,117.5 266.0,113.2 267.0,113.2 268.0,117.5 269.0,113.2 270.0,117.5 271.0,121.8 272.0,117.5 273.0,113.2 274.0,108.8 275.0,108.8 276.0,104.5 277.0,108.8 278.0,113.2 279.0,113.2 280.0,117.5 281.0,113.2 282.0,117.5 283.0,117.5 284.0,108.8 285.0,113.2 286.0,113.2 287.0,108.8 288.0,108.8 289.0,104.5 290.0,104.5 291.0,108.8 292.0,108.8 293.0,113.2 294.0,113.2 295.0,104.5 296.0,95.8 297.0,95.8 298.0,100.2 299.0,100.2 300.0,104.5 301.0,104.5 302.0,108.8 303.0,108.8 304.0,100.2 305.0,100.2 306.0,100.2 307.0,104.5 308.0,104.5 309.0,108.8 310.0,104.5 311.0,104.5 312.0,108.8 313.0,104.5 314.0,100.2 315.0,104.5 316.0,100.2 317.0,104.5 318.0,104.5 319.0,104.5 320.0,104.5 321.0,108.8 322.0,108.8 323.0,113.2 324.0,113.2 325.0,117.5 326.0,117.5 327.0,121.8 328.0,117.5 329.0,117.5 330.0,113.2 331.0,117.5 332.0,108.8 333.0,113.2 334.0,108.8 335.0,113.2 336.0,113.2 337.0,108.8 338.0,117.5 339.0,113.2 340.0,113.2 341.0,121.8 342.0,117.5 343.0,121.8 344.0,126.2 345.0,126.2 346.0,121.8 347.0,121.8 348.0,121.8 349.0,126.2 350.0,126.2 351.0,130.5 352.0,121.8 353.0,113.2 354.0,117.5 355.0,113.2 356.0,117.5 357.0,117.5 358.0,113.2 359.0,108.8 360.0,108.8 361.0,108.8 362.0,113.2 363.0,108.8 364.0,104.5 365.0,104.5 366.0,104.5 367.0,108.8 368.0,108.8 369.0,108.8 370.0,108.8 371.0,104.5 372.0,108.8 373.0,117.5 374.0,117.5 375.0,113.2 376.0,113.2 377.0,113.2 378.0,108.8 379.0,108.8 380.0,108.8 381.0,113.2 382.0,113.2 383.0,117.5 384.0,117.5 385.0,121.8 386.0,117.5 387.0,113.2 388.0,117.5 389.0,121.8 390.0,117.5 391.0,130.5 392.0,130.5 393.0,134.8 394.0,139.2 395.0,143.5 396.0,139.2 397.0,139.2 398.0,139.2 399.0,143.5 400.0,143.5 401.0,147.8 402.0,152.2 403.0,143.5 404.0,147.8 405.0,152.2 406.0,156.5 407.0,156.5 408.0,152.2 409.0,152.2 410.0,143.5 411.0,152.2 412.0,152.2 413.0,152.2 414.0,147.8 415.0,147.8 416.0,147.8 417.0,152.2 418.0,147.8 419.0,143.5 420.0,143.5 421.0,147.8 422.0,152.2 423.0,143.5 424.0,139.2 425.0,143.5 426.0,143.5 427.0,147.8 428.0,147.8 429.0,147.8 430.0,152.2 431.0,147.8 432.0,147.8 433.0,156.5 434.0,156.5 435.0,156.5 436.0,147.8 437.0,152.2 438.0,143.5 439.0,156.5 440.0,156.5 441.0,156.5 442.0,165.2 443.0,165.2 444.0,156.5 445.0,152.2 446.0,156.5 447.0,152.2 448.0,152.2 449.0,147.8 450.0,143.5 451.0,143.5 452.0,139.2 453.0,143.5 454.0,152.2 455.0,147.8 456.0,156.5 457.0,152.2 458.0,152.2 459.0,147.8 460.0,147.8 461.0,143.5 462.0,147.8 463.0,147.8 464.0,143.5 465.0,143.5 466.0,143.5 467.0,134.8 468.0,139.2 469.0,139.2 470.0,139.2 471.0,139.2 472.0,130.5 473.0,126.2 474.0,130.5 475.0,134.8 476.0,134.8 477.0,139.2 478.0,143.5 479.0,143.5 480.0,139.2 481.0,139.2 482.0,134.8 483.0,134.8 484.0,134.8 485.0,139.2 486.0,134.8 487.0,134.8 488.0,139.2 489.0,147.8 490.0,147.8 491.0,147.8 492.0,143.5 493.0,143.5 494.0,147.8 495.0,147.8 496.0,143.5 497.0,147.8 498.0,147.8 499.0,156.5 500.0,152.2 501.0,147.8 502.0,147.8 503.0,152.2 504.0,147.8 505.0,147.8 506.0,147.8 507.0,147.8 508.0,152.2 509.0,147.8 510.0,147.8 511.0,147.8 512.0,147.8 513.0,152.2 514.0,152.2 515.0,152.2 516.0,143.5 517.0,147.8 518.0,152.2 519.0,156.5 520.0,160.8 521.0,160.8 522.0,160.8 523.0,160.8 524.0,156.5 525.0,156.5 526.0,152.2 527.0,152.2 528.0,160.8 529.0,152.2 530.0,160.8 531.0,160.8 532.0,156.5 533.0,160.8 534.0,160.8 535.0,160.8 536.0,160.8 537.0,160.8 538.0,152.2 539.0,156.5 540.0,156.5 541.0,160.8 542.0,160.8 543.0,156.5 544.0,152.2 545.0,152.2 546.0,147.8 547.0,152.2 548.0,147.8 549.0,147.8 550.0,147.8 551.0,147.8 552.0,143.5 553.0,152.2 554.0,147.8 555.0,147.8 556.0,147.8 557.0,147.8 558.0,152.2 559.0,152.2 560.0,160.8 561.0,160.8 562.0,160.8 563.0,165.2 564.0,169.5 565.0,169.5 566.0,173.8 567.0,165.2 568.0,165.2 569.0,165.2 570.0,169.5 571.0,165.2 572.0,169.5 573.0,173.8 574.0,173.8 575.0,173.8 576.0,173.8 577.0,178.2 578.0,178.2 579.0,178.2 580.0,178.2 581.0,173.8 582.0,173.8 583.0,173.8 584.0,178.2 585.0,178.2 586.0,178.2 587.0,173.8 588.0,173.8 589.0,178.2 590.0,182.5 591.0,182.5 592.0,182.5 593.0,178.2 594.0,182.5 595.0,182.5 596.0,182.5 597.0,178.2 598.0,186.8 599.0,178.2 600.0,186.8 601.0,186.8 602.0,178.2 603.0,182.5 604.0,186.8 605.0,186.8 606.0,182.5 607.0,182.5 608.0,182.5 609.0,191.2 610.0,182.5 611.0,186.8 612.0,182.5 613.0,186.8 614.0,191.2 615.0,182.5 616.0,186.8 617.0,186.8 618.0,186.8 619.0,186.8 620.0,182.5 621.0,186.8 622.0,182.5 623.0,178.2 624.0,178.2 625.0,182.5 626.0,182.5 627.0,182.5 628.0,182.5 629.0,182.5 630.0,182.5 631.0,186.8 632.0,178.2 633.0,186.8 634.0,186.8 635.0,178.2 636.0,186.8 637.0,182.5 638.0,186.8 639.0,182.5 640.0,182.5 641.0,182.5 642.0,186.8 643.0,182.5 644.0,178.2 645.0,182.5 646.0,178.2 647.0,178.2 648.0,178.2 649.0,182.5 650.0,178.2 651.0,182.5 652.0,178.2 653.0,178.2 654.0,178.2 655.0,178.2 656.0,178.2 657.0,182.5 658.0,182.5 659.0,182.5 660.0,178.2 661.0,182.5 662.0,182.5 663.0,178.2 664.0,178.2 665.0,173.8 666.0,178.2 667.0,178.2 668.0,178.2 669.0,178.2 670.0,173.8 671.0,173.8 672.0,178.2 673.0,173.8 674.0,173.8 675.0,173.8 676.0,173.8 677.0,173.8 678.0,178.2 679.0,169.5 680.0,173.8 681.0,169.5 682.0,173.8 683.0,169.5 684.0,169.5 685.0,169.5 686.0,169.5 687.0,173.8 688.0,169.5 689.0,169.5 690.0,173.8 691.0,173.8 692.0,165.2 693.0,165.2 694.0,160.8 695.0,160.8 696.0,160.8 697.0,156.5 698.0,156.5 699.0,156.5 700.0,156.5 701.0,156.5 702.0,152.2 703.0,147.8 704.0,143.5 705.0,143.5 706.0,143.5 707.0,147.8 708.0,147.8 709.0,147.8 710.0,152.2 711.0,143.5 712.0,143.5 713.0,143.5 714.0,147.8 715.0,143.5 716.0,147.8 717.0,147.8 718.0,147.8 719.0,147.8 720.0,147.8 721.0,147.8 722.0,152.2 723.0,147.8 724.0,152.2 725.0,156.5 726.0,160.8" fill="none" stroke="#fff" stroke-width="1" shape-rendering="crispEdges"/>
<polyline points="86.0,142.1 88.0,136.6 90.0,136.7 92.0,139.2 94.0,140.3 96.0,141.8 98.0,144.1 100.0,146.3 102.0,147.8 104.0,147.4 106.0,148.7 108.0,149.1 110.0,150.0 112.0,149.1 114.0,148.9 116.0,148.5 118.0,147.6 120.0,146.5 122.0,144.6 124.0,143.1 126.0,143.1 128.0,144.6 130.0,144.6 132.0,145.7 134.0,146.7 136.0,147.6 138.0,148.5 140.0,148.7 142.0,150.2 144.0,151.9 146.0,153.5 148.0,155.0 150.0,156.9 152.0,158.2 154.0,158.9 156.0,159.7 158.0,160.8 160.0,162.3 162.0,163.6 164.0,164.9 166.0,165.2 168.0,164.9 170.0,163.6 172.0,162.1 174.0,160.4 176.0,158.4 178.0,155.6 180.0,153.0 182.0,151.3 184.0,149.1 186.0,147.4 188.0,146.1 190.0,145.7 192.0,146.1 194.0,147.0 196.0,148.0 198.0,149.6 200.0,150.2 202.0,150.2 204.0,150.6 206.0,150.9 208.0,150.0 210.0,148.0 212.0,143.1 214.0,138.3 216.0,133.1 218.0,127.5 220.0,121.6 222.0,115.1 224.0,109.7 226.0,104.5 228.0,100.0 230.0,96.9 232.0,97.1 234.0,96.5 236.0,96.1 238.0,96.9 240.0,98.0 242.0,99.1 244.0,99.7 246.0,100.8 248.0,102.3 250.0,104.3 252.0,106.5 254.0,109.5 256.0,112.7 258.0,114.7 260.0,116.6 262.0,119.0 264.0,120.5 266.0,121.6 268.0,122.3 270.0,122.0 272.0,121.4 274.0,119.7 276.0,117.3 278.0,115.6 280.0,114.9 282.0,114.3 284.0,113.8 286.0,113.6 288.0,113.0 290.0,111.9 292.0,110.8 294.0,111.0 296.0,110.4 298.0,109.1 300.0,107.8 302.0,106.9 304.0,106.0 306.0,104.7 308.0,104.3 310.0,104.5 312.0,104.3 314.0,103.2 316.0,103.4 318.0,104.1 320.0,104.3 322.0,104.5 324.0,105.4 326.0,107.1 328.0,108.6 330.0,109.5 332.0,110.1 334.0,111.0 336.0,112.1 338.0,113.0 340.0,113.8 342.0,114.9 344.0,116.0 346.0,116.6 348.0,116.9 350.0,117.9 352.0,119.2 354.0,119.7 356.0,119.9 358.0,120.1 360.0,119.7 362.0,118.8 364.0,117.1 366.0,115.1 368.0,113.8 370.0,112.1 372.0,110.1 374.0,110.4 376.0,110.1 378.0,109.7 380.0,109.7 382.0,109.9 384.0,111.0 386.0,112.5 388.0,113.2 390.0,114.3 392.0,116.6 394.0,118.6 396.0,121.4 398.0,124.2 400.0,127.7 402.0,131.4 404.0,134.2 406.0,137.6 408.0,141.5 410.0,144.4 412.0,146.5 414.0,147.8 416.0,148.5 418.0,149.6 420.0,149.6 422.0,149.6 424.0,149.1 426.0,148.0 428.0,147.4 430.0,147.6 432.0,147.2 434.0,147.8 436.0,148.3 438.0,148.0 440.0,149.3 442.0,150.4 444.0,152.4 446.0,153.5 448.0,153.9 450.0,153.5 452.0,152.8 454.0,151.9 456.0,151.9 458.0,152.4 460.0,151.5 462.0,150.0 464.0,148.5 466.0,147.4 468.0,145.9 470.0,145.2 472.0,144.6 474.0,142.6 476.0,140.9 478.0,139.8 480.0,139.2 482.0,138.3 484.0,137.2 486.0,136.6 488.0,136.6 490.0,137.4 492.0,138.5 494.0,140.2 496.0,141.3 498.0,142.0 500.0,143.3 502.0,144.4 504.0,145.9 506.0,147.0 508.0,148.3 510.0,148.3 512.0,148.5 514.0,149.1 516.0,149.3 518.0,149.6 520.0,150.0 522.0,151.3 524.0,152.2 526.0,152.8 528.0,153.5 530.0,154.3 532.0,155.4 534.0,156.3 536.0,157.6 538.0,158.2 540.0,158.0 542.0,158.0 544.0,157.6 546.0,157.1 548.0,156.5 550.0,155.6 552.0,154.3 554.0,153.2 556.0,151.9 558.0,151.3 560.0,151.3 562.0,151.3 564.0,152.6 566.0,154.8 568.0,156.3 570.0,158.2 572.0,160.4 574.0,162.8 576.0,165.4 578.0,168.2 580.0,170.4 582.0,171.7 584.0,172.5 586.0,173.2 588.0,174.0 590.0,175.3 592.0,176.9 594.0,177.5 596.0,178.4 598.0,178.8 600.0,179.2 602.0,180.1 604.0,181.0 606.0,181.6 608.0,182.5 610.0,183.1 612.0,183.4 614.0,184.2 616.0,184.4 618.0,184.9 620.0,185.1 622.0,185.3 624.0,184.7 626.0,184.4 628.0,184.4 630.0,184.0 632.0,183.8 634.0,183.6 636.0,183.4 638.0,183.1 640.0,182.9 642.0,182.9 644.0,183.1 646.0,182.9 648.0,182.5 650.0,182.3 652.0,182.1 654.0,181.2 656.0,180.8 658.0,180.5 660.0,180.3 662.0,180.1 664.0,179.9 666.0,179.5 668.0,179.5 670.0,179.0 672.0,178.6 674.0,178.2 676.0,177.7 678.0,177.1 680.0,176.2 682.0,175.1 684.0,174.3 686.0,173.6 688.0,173.0 690.0,172.5 692.0,171.9 694.0,170.8 696.0,169.5 698.0,167.5 700.0,166.0 702.0,164.3 704.0,161.9 706.0,159.3 708.0,156.9 710.0,154.8 712.0,152.2 714.0,150.4 716.0,148.9 718.0,148.0 720.0,147.2 722.0,146.7 724.0,147.2 726.0,148.7" fill="none" stroke="#dcdc00" stroke-width="1" shape-rendering="crispEdges"/>
</g>
<!-- left tabs -->
<g fill="none" stroke="#5a5a5a" stroke-width="1">
<path d="M31 77.500H12Q5.500 78 5.500 85V143L30.500 166"/>
<path d="M30.500 165V574Q30.500 580 27 584L3 614"/>
<path d="M30.500 165.500L22 158.500H11Q5.500 159 5.500 165V225L30.500 245"/>
<path d="M30.500 245.500L22 238.500H11Q5.500 239 5.500 245V304L30.500 326"/>
<path d="M30.500 326.500L22 317.500H11Q5.500 318 5.500 324V384L30.500 405"/>
<path d="M30.500 405.500L22 397.500H11Q5.500 398 5.500 404V491L30.500 512.500"/>
</g>
<!-- link icon -->
<g fill="none" stroke="#ccc" stroke-width="1" shape-rendering="crispEdges"><path d="M44 66.500H37.500V71.500H44M46 66.500H52.500V71.500H46M41 69.500H49"/></g>
</svg>
<span class="abs" style="width:48px;text-align-last:justify;left:58px;top:62px;font-size:12px;line-height:14px;color:#fff">沪铜主连</span>
<span class="abs" style="left:105px;top:62px;font-size:11px;line-height:14px;color:#fff;font-family:'Liberation Mono',monospace;letter-spacing:-0.6px">(SHME 2114)</span>
<span class="abs" style="left:192px;top:63px;font-size:13px;line-height:14px;color:#00dc00">48290</span>
<span class="abs" style="left:246px;top:63px;font-size:13px;line-height:14px;letter-spacing:0.2px;color:#00dc00">-170 / -0.35%</span>
<svg class="abs" style="left:1271px;top:61px" width="14" height="16" viewBox="0 0 14 16"><path d="M4.500 1.500h5l-4 5h4.500l-7.500 8 2.500-6.500h-3.500z" fill="none" stroke="#1e90e0" stroke-width="1.100"/></svg><span class="abs" style="width:18px;text-align-last:justify;left:1278px;top:65px;font-size:10px;line-height:12px;letter-spacing:-1px;color:#1e90e0">下单</span>
<span class="pl" style="top:111px;color:#ff3232">48820</span><span class="pl" style="top:150px;color:#ff3232">48730</span><span class="pl" style="top:189px;color:#ff3232">48640</span><span class="pl" style="top:228px;color:#ff3232">48550</span>
<span class="pl" style="top:268px;color:#f0f0f0">48460</span>
<span class="pl" style="top:307px;color:#00e600">48370</span><span class="pl" style="top:346px;color:#00e600">48280</span><span class="pl" style="top:385px;color:#00e600">48190</span><span class="pl" style="top:424px;color:#00e600">48100</span>
<span class="pl" style="left:1315px;top:111px;color:#ff3232">+0.74<span class="pc">%</span></span><span class="pl" style="left:1315px;top:150px;color:#ff3232">+0.56<span class="pc">%</span></span>
<span class="vl" style="top:495px">1500</span><span class="vl" style="top:526px">1200</span><span class="vl" style="top:557px">900</span><span class="vl" style="top:588px">600</span><span class="vl" style="top:619px">300</span>
<span class="abs" style="left:85px;top:472px;font-size:12px;line-height:14px;color:#e6e600;letter-spacing:-1px">CJL</span>
<svg class="abs" style="left:105px;top:476px" width="10" height="8"><path d="M1.500 2l3 3 3-3" stroke="#e6e600" fill="none" stroke-width="1.3"/></svg>
<span class="tl" style="left:66px">21:00</span><span class="tl" style="left:225px">22:00</span><span class="tl" style="left:383px">23:00</span><span class="tl" style="left:546px">0:00</span>
<div class="vt" style="top:93px;color:#dcdcdc"><span class="vb">分</span><span class="vb">时</span><span class="vb">图</span></div>
<div class="vt" style="top:173px"><span class="vb" style="font-family:'Liberation Serif',serif;font-weight:bold">K</span><span class="vb">线</span><span class="vb">图</span></div>
<div class="rt" style="width:42px;text-align-last:justify;left:28px;top:253px">资讯链</div>
<div class="rt" style="width:56px;text-align-last:justify;left:28px;top:320px">F10 资料</div>
<div class="rt" style="width:76px;text-align-last:justify;left:28px;top:401px">F9 深度资料</div>
<div id="tabs" class="abs"></div>
<svg class="abs" style="left:1250px;top:678px" width="110" height="25"><defs><linearGradient id="bg1" x1="0" y1="0" x2="1" y2="1"><stop offset="0" stop-color="#1a4268"/><stop offset="1" stop-color="#2a6494"/></linearGradient></defs><path d="M42 0H110V25H22z" fill="url(#bg1)"/></svg>
<div class="abs" style="left:575px;top:157px;width:781px;height:536px;border-radius:8px;box-shadow:0 4px 10px 4px rgba(0,0,0,.75)"></div>
<div class="abs" style="left:168px;top:680px;width:72px;height:23px;background:#e2e2e2"></div>
<span class="tab" style="width:48px;text-align-last:justify;left:36px">行业分类</span><span class="tab" style="width:66.1px;text-align-last:justify;left:97px">中金所<b class="m">CFFEX</b></span><span class="tab" style="width:60.1px;text-align-last:justify;left:175px;color:#000">上期所<b class="m">SHFE</b></span><span class="tab" style="width:54.1px;text-align-last:justify;left:247px">大商所<b class="m">DCE</b></span><span class="tab" style="width:60.1px;text-align-last:justify;left:313px">郑商所<b class="m">CZCE</b></span><span class="tab" style="width:66.1px;text-align-last:justify;left:385px">上期能源<b class="m">INE</b></span><span class="tab" style="width:48px;text-align-last:justify;left:463px">套利合约</span><span class="tab" style="width:24px;text-align-last:justify;left:523px">夜市</span><span class="tab" style="width:72px;text-align-last:justify;left:559px">主力合约排名</span><span class="tab" style="width:72px;text-align-last:justify;left:643px">商品分类指数</span><span class="tab" style="width:48px;text-align-last:justify;left:727px">即时资讯</span><span class="tab" style="width:72px;text-align-last:justify;left:799px">重要资讯导读</span><span class="tab" style="width:48px;text-align-last:justify;left:1311px">拓展功能</span><svg class="abs" style="left:1296px;top:688px" width="11" height="11"><path d="M0 3h10l-5 6z" fill="#e6e6e6"/><path d="M3.500 0v4h3v-4z" fill="#e6e6e6"/></svg>
<i class="tsep" style="left:30px"></i><i class="tsep" style="left:90px"></i><i class="tsep" style="left:306px"></i><i class="tsep" style="left:378px"></i><i class="tsep" style="left:456px"></i><i class="tsep" style="left:516px"></i><i class="tsep" style="left:552px"></i><i class="tsep" style="left:636px"></i><i class="tsep" style="left:720px"></i><i class="tsep" style="left:792px"></i><i class="tsep" style="left:876px"></i>
<div id="glass" class="abs"><div id="gcopy" class="abs">
<div class="abs" style="left:0;top:677px;width:1360px;height:83px;background:#505050"></div>
<svg class="abs" style="left:1250px;top:678px" width="110" height="82"><path d="M42 0H110V82H-20z" fill="#235680"/></svg>
<svg class="abs" style="left:0;top:0" width="1360" height="703" viewBox="0 0 1360 703"><use href="#chart"/></svg>
<div class="abs" style="left:560px;top:687px;width:70px;height:9px;background:rgba(235,235,235,.42)"></div>
<div class="abs" style="left:644px;top:687px;width:70px;height:9px;background:rgba(235,235,235,.42)"></div>
<div class="abs" style="left:728px;top:687px;width:46px;height:9px;background:rgba(235,235,235,.42)"></div>
<div class="abs" style="left:800px;top:687px;width:70px;height:9px;background:rgba(235,235,235,.42)"></div>
<div class="abs" style="left:1296px;top:687px;width:60px;height:9px;background:rgba(235,235,235,.5)"></div>
</div><div id="gtint" class="abs"></div></div>
<div id="dlg" class="abs">
<div class="abs" style="left:1px;top:1px;width:779px;height:534px;border-radius:7px;overflow:hidden">
<div class="abs" style="left:0;top:0;width:240px;height:28px;background:linear-gradient(90deg,rgba(190,165,168,.72) 0,rgba(180,150,154,.6) 70px,rgba(160,120,125,.25) 130px,rgba(150,100,105,0) 175px)"></div>
<div class="abs" style="left:0;top:28px;width:8px;height:120px;background:linear-gradient(180deg,rgba(190,165,168,.7),rgba(190,165,168,0))"></div>
<div class="abs" style="left:560px;top:0;width:219px;height:28px;background:linear-gradient(115deg,rgba(175,145,150,0) 18%,rgba(175,145,150,.5) 55%,rgba(172,140,146,.68) 80%,rgba(172,140,146,.68) 100%)"></div>
<div class="abs" style="left:771px;top:28px;width:8px;height:140px;background:linear-gradient(180deg,rgba(172,140,146,.68) 0,rgba(172,140,146,.6) 80%,rgba(172,140,146,0) 100%)"></div>
<div class="abs" style="left:150px;top:0;width:90px;height:28px;background:linear-gradient(125deg,rgba(255,200,200,0) 30%,rgba(255,200,200,.10) 50%,rgba(255,200,200,0) 70%)"></div>
<div class="abs" style="left:480px;top:0;width:80px;height:28px;background:linear-gradient(125deg,rgba(255,200,200,0) 30%,rgba(255,200,200,.08) 50%,rgba(255,200,200,0) 70%)"></div>
</div>
<span class="abs" style="width:60px;text-align-last:justify;left:9px;top:8px;font-size:12px;line-height:14px;color:#000;text-shadow:0 0 6px rgba(255,255,255,.9),0 0 10px rgba(255,255,255,.7),0 0 14px rgba(255,255,255,.5)">个性化设置</span>
<div id="close" class="abs"><svg width="15" height="13" viewBox="0 0 15 13" style="position:absolute;left:16px;top:1px"><path d="M2 2h3.600l1.900 2.600L9.400 2H13L9.300 6.700 13 11.500H9.400L7.500 8.800 5.600 11.500H2L5.700 6.700z" fill="#fff" stroke="#3c4a60" stroke-width="1.100" stroke-linejoin="round"/></svg></div>
<div id="cfr" class="abs"></div><div id="cfr2" class="abs"></div>
<div id="client" class="abs">
<div id="tree" class="abs">
<svg class="abs" style="left:0;top:0" width="163" height="450" viewBox="0 0 163 450" shape-rendering="crispEdges">
<g stroke="#808080" stroke-width="1" stroke-dasharray="1 1" fill="none">
<path d="M13.500 15V159M32.500 16V149M32.500 170V261"/>
<path d="M19 9.500H22M19 163.500H22"/>
<path d="M33 23.500H42M33 37.500H42M33 51.500H42M33 65.500H42M33 79.500H42M33 93.500H42M33 107.500H42M33 121.500H42M33 135.500H42M33 149.500H42M33 177.500H42M33 191.500H42M33 205.500H42M33 219.500H42M33 233.500H42M33 247.500H42M33 261.500H42"/>
</g>
<g><rect x="9.500" y="5.500" width="8" height="8" rx="1" fill="#fafafa" stroke="#919191"/><path d="M11 9.500H16" stroke="#2c4ea8"/>
<rect x="9.500" y="159.500" width="8" height="8" rx="1" fill="#fafafa" stroke="#919191"/><path d="M11 163.500H16" stroke="#2c4ea8"/></g>
</svg>
<div class="abs" style="left:42px;top:85px;width:64px;height:14px;background:#3399ff"></div>
<span class="ti" style="width:60px;text-align-last:justify;left:25px;top:1px">个性化设置</span>
<span class="ti" style="width:72px;text-align-last:justify;left:44px;top:15px">报价常用设置</span>
<span class="ti" style="width:72px;text-align-last:justify;left:44px;top:29px">更多报价设置</span>
<span class="ti" style="width:78.1px;text-align-last:justify;left:44px;top:43px"><b class="m">K</b>线图常用设置</span>
<span class="ti" style="width:84.2px;text-align-last:justify;left:44px;top:57px">更多<b class="m">K</b>线图设置<b class="d">1</b></span>
<span class="ti" style="width:84.2px;text-align-last:justify;left:44px;top:71px">更多<b class="m">K</b>线图设置<b class="d">2</b></span>
<span class="ti" style="width:60px;text-align-last:justify;left:44px;top:85px;color:#fff;-webkit-text-stroke:0.25px #fff">分时图设置</span>
<span class="ti" style="width:72px;text-align-last:justify;left:44px;top:99px">自设页面设置</span>
<span class="ti" style="width:96px;text-align-last:justify;left:44px;top:113px">小数点与涨跌定义</span>
<span class="ti" style="width:48px;text-align-last:justify;left:44px;top:127px">副屏设置</span>
<span class="ti" style="width:48px;text-align-last:justify;left:44px;top:141px">其它设置</span>
<span class="ti" style="width:48px;text-align-last:justify;left:25px;top:155px">操作习惯</span>
<span class="ti" style="width:48px;text-align-last:justify;left:44px;top:169px">颜色设置</span>
<span class="ti" style="width:48px;text-align-last:justify;left:44px;top:183px">字体设置</span>
<span class="ti" style="width:72px;text-align-last:justify;left:44px;top:197px">合约代码设置</span>
<span class="ti" style="width:84px;text-align-last:justify;left:44px;top:211px">指标快捷键设置</span>
<span class="ti" style="width:108px;text-align-last:justify;left:44px;top:225px">分析周期快捷键设置</span>
<span class="ti" style="width:108px;text-align-last:justify;left:44px;top:239px">自设页面快捷键设置</span>
<span class="ti" style="width:108px;text-align-last:justify;left:44px;top:253px">自建板块快捷键设置</span>
</div>
<!-- right pane (coords relative to client at 584,186) -->
<div class="abs" style="left:207px;top:23px;width:243px;height:78px;border:3px solid #ff1c1c;border-radius:4px"></div>
<span class="lb" style="width:48px;text-align-last:justify;left:209px;top:35px">黄线设置</span>
<div class="combo" style="left:287px;top:32px;width:146px"><span class="jt" style="width:60px;text-align-last:justify">移动平均线</span></div>
<span class="lb" style="width:84px;text-align-last:justify;left:209px;top:70px">移动平均线周期</span>
<div class="abs" style="left:342px;top:66px;width:90px;height:21px;border:1px solid #c9ccd6;background:#fff"><span class="abs" style="left:2px;top:2px;font-size:11px;line-height:14px;letter-spacing:-0.5px">20</span>
<div class="abs" style="left:71px;top:0;width:17px;height:19px;background:#f0f0f0"></div>
<div class="abs" style="left:72px;top:1px;width:16px;height:9px;border:1px solid #c0c0c0;background:linear-gradient(#fafafa,#e4e4e4)"></div>
<div class="abs" style="left:72px;top:10px;width:16px;height:9px;border:1px solid #c0c0c0;background:linear-gradient(#fafafa,#e4e4e4)"></div>
<svg class="abs" style="left:72px;top:1px" width="16" height="18"><path d="M5 6L8 3L11 6z" fill="#5070c4"/><path d="M5 12L8 15L11 12z" fill="#5070c4"/></svg>
</div>
<span class="lb" style="width:48px;text-align-last:justify;left:209px;top:104px">鼠标滚轮</span>
<div class="combo" style="left:287px;top:101px;width:146px;height:20px;line-height:19px"><span class="jt" style="width:108px;text-align-last:justify">缩放分时图显示比例</span></div>
<div class="cb" style="left:210px;top:139px"><i></i></div><span class="lb" style="width:60px;text-align-last:justify;left:225.500px;top:139px">走势线加粗</span>
<div class="cb" style="left:210px;top:162px"><i></i></div><span class="lb" style="width:108px;text-align-last:justify;left:225.500px;top:162px">显示多空能量红绿柱</span>
<div class="cb" style="left:210px;top:181px"><i></i><svg class="abs" style="left:1px;top:1px" width="10" height="10"><path d="M1.500 5l2.200 3L8.500 1.500" stroke="#2a3f9a" stroke-width="1.800" fill="none"/></svg></div><span class="lb" style="width:144px;text-align-last:justify;left:225.500px;top:181px">坐标刻度值用红绿指示涨跌</span>
<div class="cb" style="left:210px;top:201px"><i></i></div><span class="lb" style="width:132px;text-align-last:justify;left:225.500px;top:201px">成交量线用红绿指示涨跌</span>
<div class="cb" style="left:210px;top:222px"><i></i><svg class="abs" style="left:1px;top:1px" width="10" height="10"><path d="M1.500 5l2.200 3L8.500 1.500" stroke="#2a3f9a" stroke-width="1.800" fill="none"/></svg></div><span class="lb" style="width:126.4px;text-align-last:justify;left:225.500px;top:222px">国内<b class="d">3</b>所<b class="d">20</b>秒高频分时图</span>
<div class="btn" style="left:509px;top:467px;width:73px;border-color:#3c7fb1;box-shadow:inset 0 0 0 1px #48d1f5, inset 0 0 0 2px rgba(255,255,255,.5)"><span class="jt" style="width:42.1px;text-align-last:justify">应用<b class="m" style="font-size:11px">(A)</b></span><div class="abs" style="left:2px;top:2px;width:67px;height:13px;border:1px dotted rgba(190,140,120,.6)"></div></div>
<div class="btn" style="left:594px;top:467px;width:73px"><span class="jt" style="width:24px;text-align-last:justify">确定</span></div>
<div class="btn" style="left:680px;top:467px;width:73px"><span class="jt" style="width:24px;text-align-last:justify">取消</span></div>
</div>
</div>

</body></html>
